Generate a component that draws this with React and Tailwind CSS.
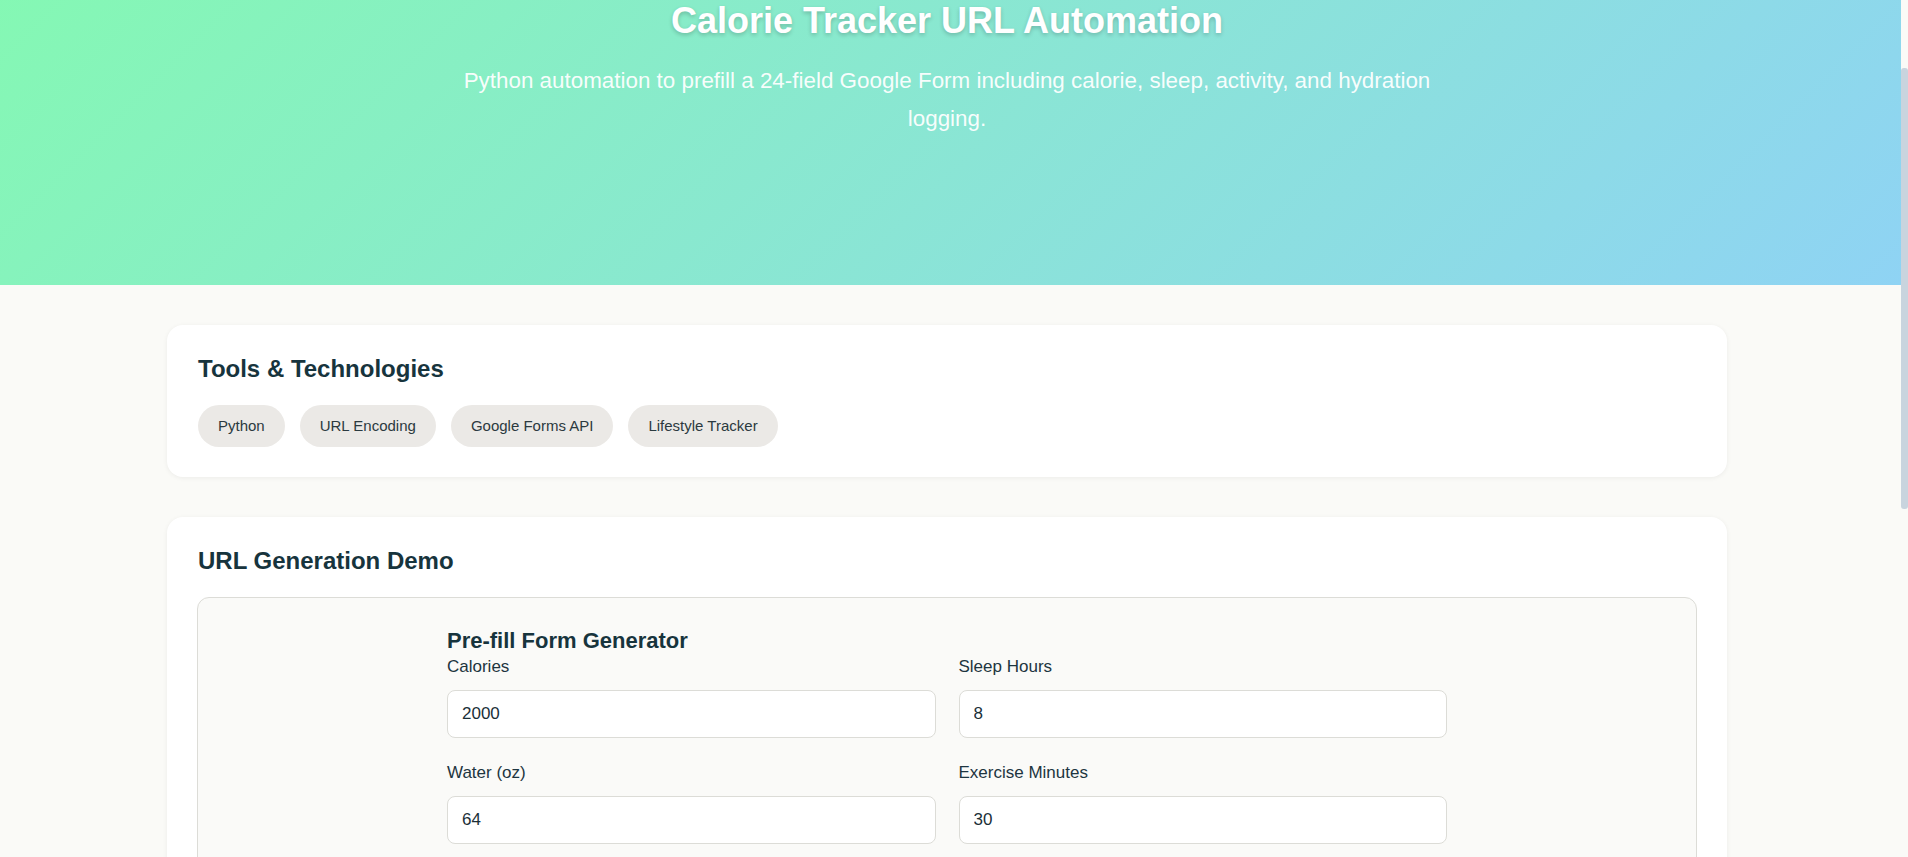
import React, { useLayoutEffect, useRef } from "react";

const rows = [
  [
    { label: "Calories", value: "2000" },
    { label: "Sleep Hours", value: "8" },
  ],
  [
    { label: "Water (oz)", value: "64" },
    { label: "Exercise Minutes", value: "30" },
  ],
  [
    { label: "Steps", value: "8000" },
    { label: "Protein (g)", value: "120" },
  ],
  [
    { label: "Mood (1-10)", value: "7" },
    { label: "Weight (lbs)", value: "165" },
  ],
];

const tags = ["Python", "URL Encoding", "Google Forms API", "Lifestyle Tracker"];

function Field({ label, value }) {
  return (
    <div className="flex flex-col">
      <label className="text-[17px] leading-[25px] mb-[11px] text-[#1d3540]">{label}</label>
      <input
        readOnly
        value={value}
        className="h-[48px] w-full rounded-[8px] border border-[#dcdcd7] bg-white px-[14px] text-[17px] text-[#1a2f38] outline-none font-['Liberation_Sans',Arial,sans-serif]"
      />
    </div>
  );
}

export default function App() {
  const ref = useRef(null);
  useLayoutEffect(() => {
    if (ref.current) ref.current.scrollTop = 132;
  }, []);

  return (
    <div className="flex h-screen bg-[#fafaf7] font-['Liberation_Sans',Arial,sans-serif]">
      <div
        ref={ref}
        className="flex-1 min-w-0 overflow-y-auto [scrollbar-width:none] [&::-webkit-scrollbar]:hidden"
      >
        <header className="bg-[linear-gradient(135deg,#84fab0_0%,#8fd3f4_100%)] pt-[131px] pb-[147px] pr-[7px]">
          <div className="mx-auto max-w-[1000px] text-center text-white">
            <h1 className="text-[36px] leading-[1.2] font-bold [text-shadow:0_2px_4px_rgba(0,0,0,0.2)]">
              Calorie Tracker URL Automation
            </h1>
            <p className="mt-[20px] text-[22.4px] leading-[38px] text-white/95">
              Python automation to prefill a 24-field Google Form including calorie, sleep, activity, and hydration logging.
            </p>
          </div>
        </header>

        <main className="pt-[40px] pb-[56px] pr-[7px]">
          <div className="mx-auto flex max-w-[1560px] flex-col gap-[40px]">
            <section className="rounded-[16px] bg-white p-[30px] pl-[31px] shadow-[0_1px_5px_rgba(0,0,0,0.06)]">
              <h2 className="text-[24px] leading-[1.2] font-bold text-[#17343d] mb-[21px]">Tools &amp; Technologies</h2>
              <div className="flex flex-wrap gap-[15px]">
                {tags.map((t) => (
                  <span
                    key={t}
                    className="rounded-full bg-[#ebe9e6] px-[20px] py-[10px] text-[15px] leading-[22px] text-[#2b3a40]"
                  >
                    {t}
                  </span>
                ))}
              </div>
            </section>

            <section className="rounded-[16px] bg-white p-[30px] shadow-[0_1px_5px_rgba(0,0,0,0.06)]">
              <h2 className="text-[24px] leading-[1.2] font-bold text-[#17343d] mb-[21px] pl-[1px]">URL Generation Demo</h2>
              <div className="rounded-[12px] border border-[#dcdcd7] bg-[#fafaf8] p-[30px]">
                <div className="mx-auto max-w-[1000px]">
                  <h3 className="text-[22px] leading-[1.2] font-bold text-[#17343d]">Pre-fill Form Generator</h3>
                  <div className="grid grid-cols-2 gap-x-[23px] gap-y-[22px]">
                    {rows.flat().map((f) => (
                      <Field key={f.label} label={f.label} value={f.value} />
                    ))}
                  </div>
                  <button className="mt-[24px] h-[48px] rounded-[8px] bg-[#2f9e6e] px-[24px] text-[17px] font-bold text-white">
                    Generate Pre-filled URL
                  </button>
                  <div className="mt-[20px] rounded-[8px] border border-[#dcdcd7] bg-white p-[16px] text-[15px] leading-[22px] text-[#2b3a40] break-all">
                    https://docs.google.com/forms/d/e/1FAIpQLSf.../viewform?usp=pp_url&amp;entry.1001=2000&amp;entry.1002=8&amp;entry.1003=64&amp;entry.1004=30
                  </div>
                </div>
              </div>
            </section>

            <section className="rounded-[16px] bg-white p-[30px] shadow-[0_1px_5px_rgba(0,0,0,0.06)]">
              <h2 className="text-[24px] leading-[1.2] font-bold text-[#17343d] mb-[21px]">Key Features</h2>
              <ul className="flex flex-col gap-[10px] text-[17px] leading-[25px] text-[#2b3a40]">
                <li>Maps 24 form fields to their Google Form entry IDs</li>
                <li>URL-encodes values for safe prefilled links</li>
              </ul>
            </section>
          </div>
        </main>
      </div>

      <div className="w-[7px] shrink-0 bg-[#fafaf7]">
        <div className="mt-[68px] h-[441px] rounded-[3px] bg-[#c9d4de]" />
      </div>
    </div>
  );
}
